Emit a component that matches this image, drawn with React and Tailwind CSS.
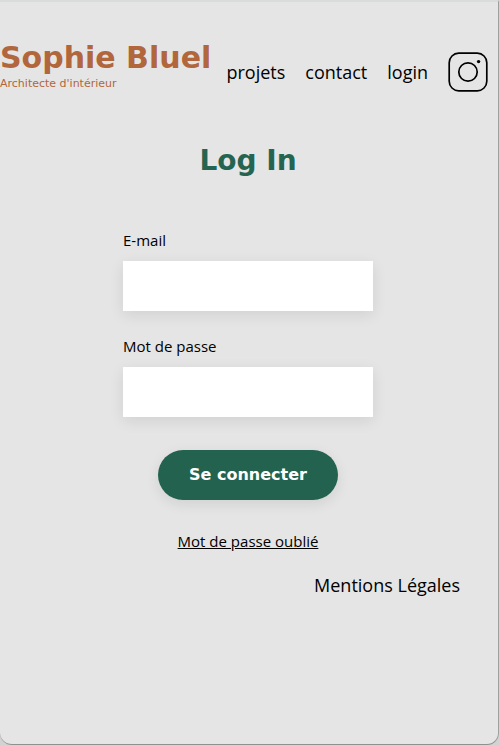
const navLinks = ["projets", "contact", "login"];

function InstagramIcon() {
  return (
    <svg viewBox="0 0 40 40" className="h-10 w-10" fill="none" stroke="#000" strokeWidth="1.7" aria-hidden="true">
      <rect x="1.2" y="1.2" width="37.6" height="37.6" rx="9.5" />
      <circle cx="20" cy="20" r="9.2" />
      <circle cx="30.6" cy="9.6" r="1.7" fill="#000" stroke="none" />
    </svg>
  );
}

function Field({ id, label, type }) {
  return (
    <div className="flex flex-col gap-2.5">
      <label htmlFor={id} className="text-[15px] leading-[22px]">{label}</label>
      <input
        id={id}
        name={id}
        type={type}
        className="h-[50px] w-full bg-white px-3 shadow-[0px_4px_14px_rgba(0,0,0,0.09)] outline-none"
      />
    </div>
  );
}

export default function App() {
  return (
    <div className="flex min-h-screen flex-col bg-[#d2d2d2]">
      <div className="flex-1 overflow-hidden rounded-b-xl border-t-2 border-r border-b border-t-[#d9dcda] border-r-[#a0a0a0] border-b-[#909090] bg-[#e5e5e5] font-['Open_Sans',sans-serif] text-black">
        <header className="flex items-end justify-end gap-3 pt-[38px] pr-2.5">
          <h1 className="mr-auto flex flex-col font-['DejaVu_Sans',sans-serif] whitespace-nowrap text-[#b1663c]">
            <span className="text-[30px] leading-9 font-bold">Sophie Bluel</span>
            <span className="text-[11px] leading-4">Architecte d'intérieur</span>
          </h1>
          <nav>
            <ul className="flex items-center gap-5 text-[18px] leading-6">
              {navLinks.map((name) => (
                <li key={name}>
                  <a href={"#" + name}>{name}</a>
                </li>
              ))}
              <li>
                <a href="#instagram" aria-label="Instagram" className="block">
                  <InstagramIcon />
                </a>
              </li>
            </ul>
          </nav>
        </header>

        <main className="flex flex-col items-center pr-0.5">
          <h2 className="mt-[49px] font-['DejaVu_Sans',sans-serif] text-[28px] leading-10 font-bold text-[#256451]">Log In</h2>
          <form className="mt-12 flex w-full max-w-[250px] flex-col items-center gap-[33px]">
            <div className="flex w-full flex-col gap-6">
              <Field id="email" label="E-mail" type="email" />
              <Field id="password" label="Mot de passe" type="password" />
            </div>
            <button
              type="button"
              className="h-[50px] w-[180px] rounded-full bg-[#23624f] font-['DejaVu_Sans',sans-serif] text-[16px] font-bold text-white shadow-[0px_4px_14px_rgba(0,0,0,0.09)]"
            >
              Se connecter
            </button>
            <a href="#oubli" className="text-[15px] leading-4 underline">Mot de passe oublié</a>
          </form>
        </main>

        <footer className="mt-6 flex justify-end pr-[38px]">
          <a href="#mentions" className="text-[18px] leading-6">Mentions Légales</a>
        </footer>
      </div>
    </div>
  );
}
